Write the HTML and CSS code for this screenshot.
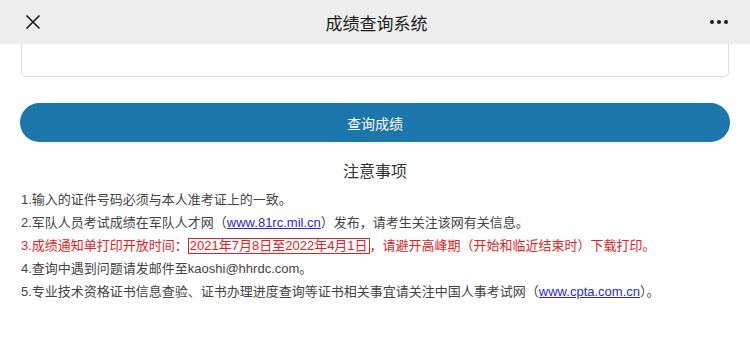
FILE: index.html
```html
<!DOCTYPE html>
<html lang="zh-CN">
<head>
  <meta charset="UTF-8" />
  <meta name="viewport" content="width=device-width, initial-scale=1.0" />
  <title>成绩查询系统</title>
  <link rel="stylesheet" href="styles.css">
</head>
<body>
  <header class="topbar">
    <span class="btn-close">
      <svg width="16" height="16" viewBox="0 0 16 16"><path d="M1.5 1.5 L14.5 14.5 M14.5 1.5 L1.5 14.5" stroke="#1a1a1a" stroke-width="1.6" fill="none"/></svg>
    </span>
    <h1>成绩查询系统</h1>
    <span class="btn-more"><i></i><i></i><i></i></span>
  </header>

  <div class="page">
    <div class="input-card"></div>

    <button class="btn-query">查询成绩</button>

    <h2>注意事项</h2>
    <ul class="notice">
      <li>1.输入的证件号码必须与本人准考证上的一致。</li>
      <li>2.军队人员考试成绩在军队人才网（<a href="#">www.81rc.mil.cn</a>）发布，请考生关注该网有关信息。</li>
      <li class="red">3.成绩通知单打印开放时间：<span class="date-box">2021年7月8日至2022年4月1日</span>，请避开高峰期（开始和临近结束时）下载打印。</li>
      <li>4.查询中遇到问题请发邮件至kaoshi@hhrdc.com。</li>
      <li>5.专业技术资格证书信息查验、证书办理进度查询等证书相关事宜请关注中国人事考试网（<a href="#">www.cpta.com.cn</a>）。</li>
    </ul>
  </div>
</body>
</html>
```

FILE: styles.css
```css
body {
  font-family: 'Liberation Sans', 'Noto Sans CJK SC', sans-serif;
  background-color: #fff;
  margin: 0;
  padding: 0;
  color: #333;
}
.topbar {
  height: 44px;
  background-color: #ededed;
  display: flex;
  align-items: center;
  justify-content: space-between;
  padding: 0 22px 0 25px;
}
.topbar h1 {
  margin: 0;
  font-size: 17px;
  font-weight: normal;
  color: #1a1a1a;
}
.btn-close {
  display: flex;
  width: 40px;
}
.btn-more {
  display: flex;
  gap: 3px;
  width: 40px;
  justify-content: flex-end;
}
.btn-more i {
  width: 4px;
  height: 4px;
  border-radius: 50%;
  background: #1a1a1a;
}
.page {
  padding: 0 20px;
}
.input-card {
  height: 32px;
  margin: 0 1px;
  border: 1px solid #dedede;
  border-top: 0;
  border-radius: 0 0 5px 5px;
}
.btn-query {
  display: block;
  width: 100%;
  height: 39px;
  margin-top: 26px;
  border: none;
  border-radius: 20px;
  background-color: #1c75ab;
  color: #fff;
  font-family: inherit;
  font-size: 14px;
}
h2 {
  margin: 18px 0 0;
  text-align: center;
  font-size: 16px;
  line-height: 24px;
  font-weight: normal;
  color: #333;
}
.notice {
  list-style: none;
  margin: 4px 0 0;
  padding: 0 0 0 1px;
  font-size: 13px;
  line-height: 23px;
  color: #444;
}
.notice a {
  color: #2a2ad0;
}
.notice .red {
  color: #e3231f;
}
.date-box {
  display: inline-block;
  line-height: 14px;
  padding: 0 1px;
  border: 1px solid #d8272a;
}
```
